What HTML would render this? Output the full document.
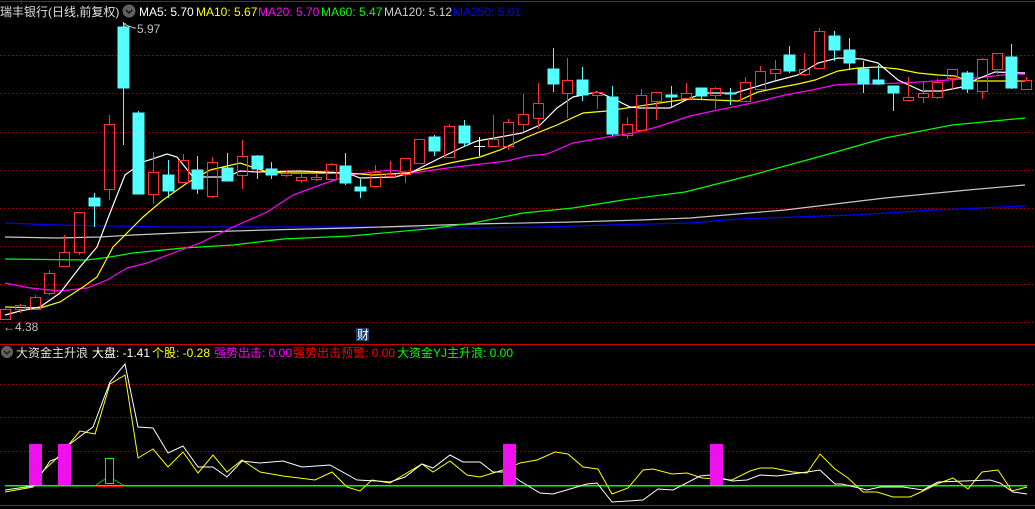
<!DOCTYPE html>
<html><head><meta charset="utf-8"><style>
html,body{margin:0;padding:0;background:#000;width:1035px;height:509px;overflow:hidden}
svg{display:block}
text{font-family:"Liberation Sans","Noto Sans CJK SC",sans-serif;font-size:12px}
</style></head><body>
<svg width="1035" height="509" viewBox="0 0 1035 509" xmlns="http://www.w3.org/2000/svg" shape-rendering="crispEdges">
<rect width="1035" height="509" fill="#000"/>
<line x1="0" y1="1.5" x2="1035" y2="1.5" stroke="#c00000"/>
<line x1="21.5" y1="0" x2="21.5" y2="4" stroke="#c00000"/>
<g stroke="#b00000" stroke-dasharray="1,3">
<line x1="0" y1="55.5" x2="1035" y2="55.5"/><line x1="0" y1="93.5" x2="1035" y2="93.5"/>
<line x1="0" y1="132.5" x2="1035" y2="132.5"/><line x1="0" y1="170.5" x2="1035" y2="170.5"/>
<line x1="0" y1="208.5" x2="1035" y2="208.5"/><line x1="0" y1="246.5" x2="1035" y2="246.5"/>
<line x1="0" y1="284.5" x2="1035" y2="284.5"/><line x1="0" y1="322.5" x2="1035" y2="322.5"/>
<line x1="0" y1="384.5" x2="1035" y2="384.5"/><line x1="0" y1="417.5" x2="1035" y2="417.5"/>
<line x1="0" y1="451.5" x2="1035" y2="451.5"/>
</g>
<line x1="0" y1="344.5" x2="1035" y2="344.5" stroke="#d00000"/>
<line x1="0" y1="505.5" x2="1035" y2="505.5" stroke="#d00000"/>

<g fill="none" stroke-width="1.2" shape-rendering="auto">
<polyline stroke="#0000ff" points="5,223 57,225 167,227 233,227 350,227 473,228 540,227 607,225 690,223 738,219 852,215 935,210 1025,206"/>
<polyline stroke="#c8c8c8" points="5,237 57,238 100,237 133,235 200,232 267,230 350,228 473,224 573,222 640,220 690,218 785,210 885,198 968,190 1025,185"/>
<polyline stroke="#00ff00" points="5,259 87,260 110,257 133,253 183,248 233,245 283,239 350,236 427,229 473,223 523,213 573,208 623,200 685,192 752,175 818,157 885,138 952,125 1025,118"/>
<polyline stroke="#ff00ff" points="5,283 30,288 60,291 87,288 107,280 127,268 147,263 173,253 200,243 233,227 267,212 293,195 320,185 350,175 373,172 390,170 413,173 447,168 473,165 507,161 527,156 547,154 573,143 607,137 633,133 657,127 690,116 718,110 752,103 785,95 812,90 835,85 852,84 872,84 902,83 935,81 962,79 985,77 1002,75 1025,74"/>
<polyline stroke="#ffff00" points="5,307 40,308 60,302 83,287 97,277 113,247 130,230 143,217 163,200 187,183 210,170 240,163 267,172 283,173 347,173 373,175 407,173 433,167 450,163 480,157 500,150 527,137 557,125 583,113 607,111 633,107 673,101 690,99 738,101 758,92 782,87 798,84 815,80 838,71 858,68 878,67 898,69 918,73 938,75 955,76 968,81 1025,81"/>
<polyline stroke="#ffffff" points="5,315 20,311 40,307 60,293 80,267 97,247 110,213 125,175 143,162 167,154 177,157 193,177 213,177 227,177 240,171 257,172 300,171 347,173 360,178 395,177 410,173 440,158 463,147 477,141 500,137 522,133 540,125 557,108 573,97 597,92 610,97 630,107 640,108 670,108 690,98 705,93 735,93 755,87 775,81 798,75 818,63 838,58 862,59 878,63 898,80 922,91 942,91 962,87 975,80 995,72 1025,73"/>
</g>

<g stroke-width="1">
<g stroke="#ff3333" fill="none">
<path d="M5.5,307V309M5.5,319V319 M20.5,304V305M20.5,309V313 M35.5,295V297 M49.5,270V273M49.5,293V295 M64.5,235V252M64.5,266V267 M79.5,212V212M79.5,252V255 M109.5,115V124M109.5,189V200 M153.5,152V172M153.5,194V204 M183.5,154V160M183.5,182V183 M212.5,157V162M212.5,196V198 M242.5,140V156M242.5,175V189 M286.5,170V173M286.5,175V177 M301.5,174V177M301.5,180V183 M316.5,174V177M316.5,179V181 M331.5,163V164M331.5,179V182 M375.5,165V172M375.5,186V187 M390.5,161V174M390.5,176V177 M405.5,174V183 M449.5,124V126M449.5,157V158 M493.5,115V139M493.5,146V147 M508.5,119V122M508.5,146V150 M523.5,94V114M523.5,124V132 M538.5,83V103M538.5,118V129 M567.5,58V80M567.5,93V118 M597.5,95V109 M627.5,117V124M627.5,135V139 M641.5,89V95 M656.5,101V120 M686.5,83V93 M715.5,87V88M715.5,95V109 M745.5,77V82M745.5,101V102 M760.5,66V71 M775.5,60V69M775.5,73V80 M804.5,53V69M804.5,74V76 M819.5,28V31M819.5,68V69 M908.5,77V97M908.5,100V101 M923.5,81V93M923.5,97V103 M937.5,79V82M937.5,97V99 M952.5,78V89 M982.5,58V59M982.5,91V99 M997.5,69V74 M1026.5,77V80"/>
<rect x="0.5" y="309.5" width="10" height="10"/><rect x="15.5" y="305.5" width="10" height="4"/><rect x="30.5" y="297.5" width="10" height="12"/><rect x="44.5" y="273.5" width="10" height="20"/><rect x="59.5" y="252.5" width="10" height="14"/><rect x="74.5" y="212.5" width="10" height="40"/><rect x="104.5" y="124.5" width="10" height="65"/><rect x="148.5" y="172.5" width="10" height="22"/><rect x="178.5" y="160.5" width="10" height="22"/><rect x="207.5" y="162.5" width="10" height="34"/><rect x="237.5" y="156.5" width="10" height="19"/><rect x="281.5" y="173.5" width="10" height="2"/><rect x="296.5" y="177.5" width="10" height="3"/><rect x="311.5" y="177.5" width="10" height="2"/><rect x="326.5" y="164.5" width="10" height="15"/><rect x="370.5" y="172.5" width="10" height="14"/><rect x="385.5" y="174.5" width="10" height="2"/><rect x="400.5" y="158.5" width="10" height="16"/><rect x="414.5" y="139.5" width="10" height="24"/><rect x="444.5" y="126.5" width="10" height="31"/><rect x="488.5" y="139.5" width="10" height="7"/><rect x="503.5" y="122.5" width="10" height="24"/><rect x="518.5" y="114.5" width="10" height="10"/><rect x="533.5" y="103.5" width="10" height="15"/><rect x="562.5" y="80.5" width="10" height="13"/><rect x="592.5" y="92.5" width="10" height="3"/><rect x="622.5" y="124.5" width="10" height="11"/><rect x="636.5" y="95.5" width="10" height="35"/><rect x="651.5" y="92.5" width="10" height="9"/><rect x="681.5" y="93.5" width="10" height="5"/><rect x="710.5" y="88.5" width="10" height="7"/><rect x="740.5" y="82.5" width="10" height="19"/><rect x="755.5" y="71.5" width="10" height="18"/><rect x="770.5" y="69.5" width="10" height="4"/><rect x="799.5" y="69.5" width="10" height="5"/><rect x="814.5" y="31.5" width="10" height="37"/><rect x="903.5" y="97.5" width="10" height="3"/><rect x="918.5" y="93.5" width="10" height="4"/><rect x="932.5" y="82.5" width="10" height="15"/><rect x="947.5" y="69.5" width="10" height="9"/><rect x="977.5" y="59.5" width="10" height="32"/><rect x="992.5" y="53.5" width="10" height="16"/><rect x="1021.5" y="80.5" width="10" height="9"/>
</g>
<g stroke="#54ffff" fill="#54ffff">
<path fill="none" d="M94.5,193V227 M123.5,22V145 M138.5,111V194 M168.5,160V198 M197.5,156V194 M227.5,153V181 M257.5,155V179 M271.5,162V179 M345.5,153V185 M360.5,179V198 M434.5,135V156 M464.5,120V147 M553.5,48V92 M582.5,67V101 M612.5,86V136 M671.5,86V107 M701.5,88V100 M730.5,88V105 M789.5,46V73 M834.5,31V61 M849.5,38V69 M863.5,61V93 M878.5,65V85 M893.5,86V111 M967.5,71V93 M1011.5,44V89"/>
<rect x="89" y="198" width="11" height="8"/><rect x="118" y="27" width="11" height="61"/><rect x="133" y="113" width="11" height="81"/><rect x="163" y="175" width="11" height="16"/><rect x="192" y="170" width="11" height="19"/><rect x="222" y="168" width="11" height="13"/><rect x="252" y="156" width="11" height="13"/><rect x="266" y="169" width="11" height="6"/><rect x="340" y="166" width="11" height="17"/><rect x="355" y="187" width="11" height="4"/><rect x="429" y="137" width="11" height="14"/><rect x="459" y="126" width="11" height="17"/><rect x="548" y="69" width="11" height="15"/><rect x="577" y="80" width="11" height="15"/><rect x="607" y="97" width="11" height="37"/><rect x="666" y="95" width="11" height="2"/><rect x="696" y="88" width="11" height="8"/><rect x="725" y="93" width="11" height="1"/><rect x="784" y="55" width="11" height="16"/><rect x="829" y="36" width="11" height="14"/><rect x="844" y="50" width="11" height="13"/><rect x="858" y="69" width="11" height="15"/><rect x="873" y="80" width="11" height="4"/><rect x="888" y="86" width="11" height="7"/><rect x="962" y="73" width="11" height="16"/><rect x="1006" y="57" width="11" height="31"/>
</g>
<path stroke="#ffffff" d="M479.5,137V156 M474,146.5H485"/>
</g>

<text x="0" y="16" fill="#e0e0e0">瑞丰银行(日线,前复权)</text>
<circle cx="129" cy="11" r="6.5" fill="#606060"/>
<path d="M126,10 l3,3 l3,-3" stroke="#111" stroke-width="1.5" fill="none" shape-rendering="auto"/>
<text x="139" y="16" fill="#ffffff">MA5: 5.70</text>
<text x="196" y="16" fill="#ffff00">MA10: 5.67</text>
<text x="258" y="16" fill="#ff00ff">MA20: 5.70</text>
<text x="321" y="16" fill="#00ff00">MA60: 5.47</text>
<text x="384" y="16" fill="#d0d0d0">MA120: 5.12</text>
<text x="453" y="16" fill="#0000ff">MA250: 5.01</text>
<path d="M125,23 v4 M124,24 h2 M126,25 l8,3 h2" stroke="#c0c0c0" fill="none"/>
<text x="137" y="33" fill="#c0c0c0">5.97</text>
<text x="3" y="331" fill="#c0c0c0">←4.38</text>
<rect x="356" y="328" width="13" height="13" fill="#1c3f70"/>
<text x="357" y="339" fill="#ffffff">财</text>

<circle cx="7" cy="352" r="6" fill="#606060"/>
<path d="M4,351 l3,3 l3,-3" stroke="#222" stroke-width="1.5" fill="none" shape-rendering="auto"/>
<text x="16" y="357" fill="#e0e0e0">大资金主升浪</text>
<text x="92" y="357" fill="#ffffff">大盘: -1.41</text>
<text x="152" y="357" fill="#ffff00">个股: -0.28</text>
<text x="214" y="357" fill="#ff00ff">强势出击: 0.00</text>
<text x="293" y="357" fill="#ff0000">强势出击预警: 0.00</text>
<text x="397" y="357" fill="#00ff00">大资金YJ主升浪: 0.00</text>

<line x1="5" y1="485.5" x2="1027" y2="485.5" stroke="#00ff00" stroke-width="1.5"/>
<g fill="none" shape-rendering="auto">
<polyline stroke="#ffff00" points="5,492 33,487 42,472 57,458 70,443 80,431 95,434 110,384 125,375 138,458 153,449 168,467 183,452 198,473 213,455 227,472 242,460 260,472 283,476 315,480 332,472 347,487 360,491 372,480 390,483 422,464 433,472 450,461 467,475 480,477 503,470 520,463 537,460 555,452 568,454 583,467 598,469 612,494 628,488 643,470 653,469 672,474 687,473 702,478 732,480 750,471 760,468 773,468 793,472 807,473 820,454 835,469 848,478 863,492 877,492 893,497 910,497 923,491 937,484 953,478 968,489 982,472 998,470 1012,491 1027,487"/>
<polyline stroke="#ffffff" points="5,490 33,486 42,473 50,461 58,458 70,444 82,435 93,427 110,382 125,364 138,427 153,428 168,453 183,446 198,467 213,467 227,477 242,461 260,463 283,461 302,467 330,465 357,480 377,481 390,482 405,477 422,464 433,468 450,455 463,462 480,462 493,472 503,472 516,478 520,481 540,493 553,494 587,484 597,483 612,502 643,500 658,489 673,490 700,476 710,475 732,481 747,480 760,475 777,476 807,472 820,470 835,484 842,484 867,490 880,487 903,487 923,490 938,482 990,480 1000,483 1013,492 1027,494"/>
<path stroke="#00cc00" d="M96,485 L105,479 M113,479 L123,485"/>
</g>
<line x1="96" y1="486.5" x2="123" y2="486.5" stroke="#ff0000"/>
<rect x="105.5" y="458.5" width="8" height="25" fill="none" stroke="#00ff00"/>
<g fill="#ee11ee">
<rect x="29" y="444" width="13" height="41"/><rect x="58" y="444" width="13" height="41"/>
<rect x="503" y="444" width="13" height="41"/><rect x="710" y="444" width="13" height="41"/>
</g>
</svg>
</body></html>
